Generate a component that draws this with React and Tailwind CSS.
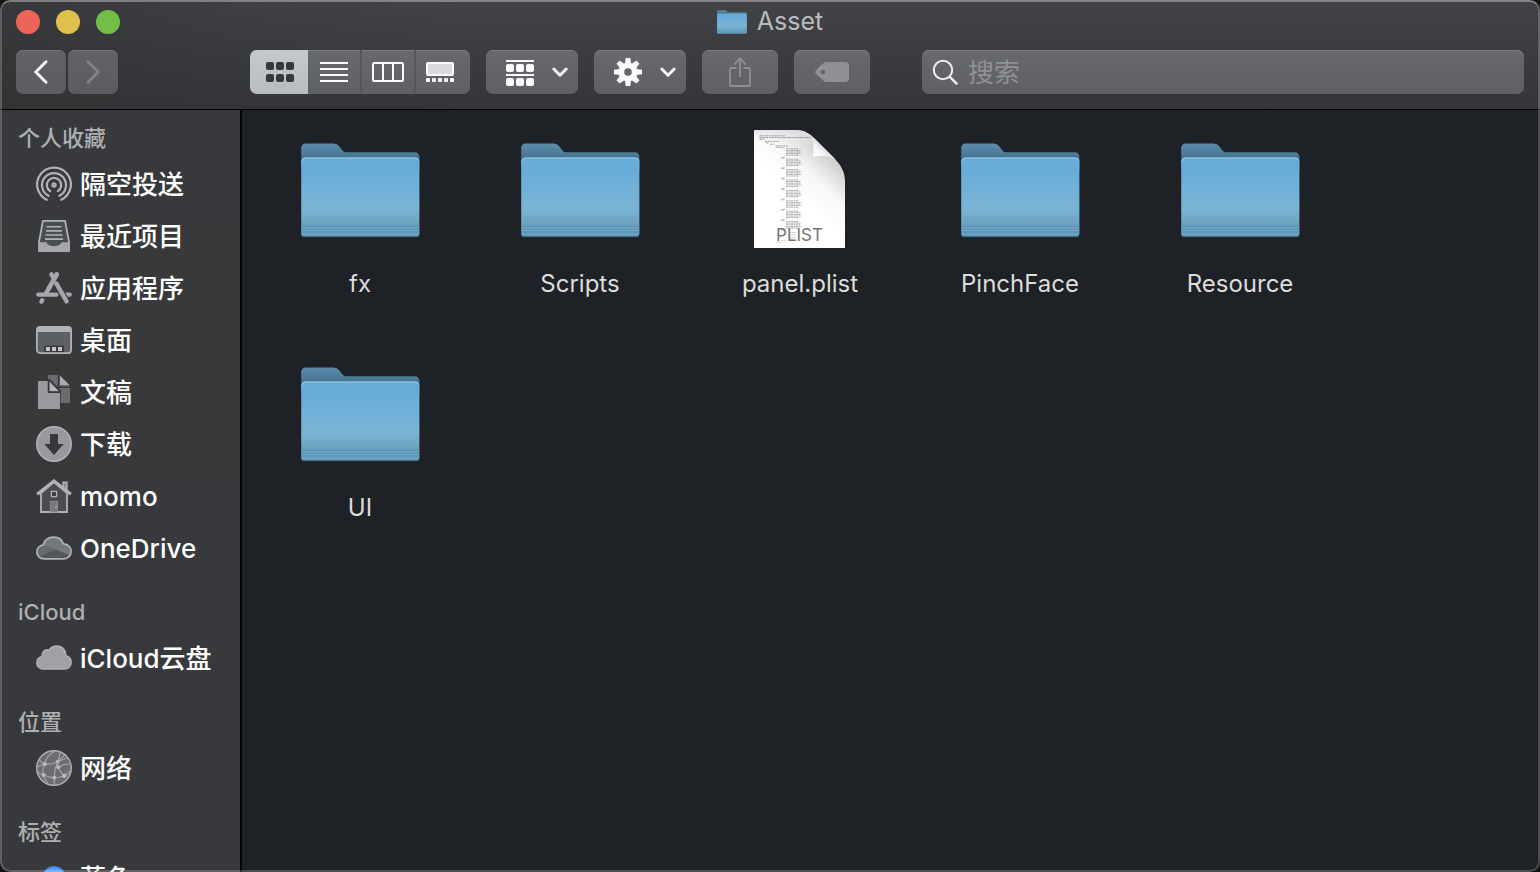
import React from "react";

const LIGHT = "#b0b2b5";

/* ---------- sidebar icons, 36 x 36 ---------- */

function SideIcon({ children }) {
  return (
    <svg viewBox="0 0 36 36" className="size-9 shrink-0" fill="none" aria-hidden="true">
      {children}
    </svg>
  );
}

const AirDropIcon = () => (
  <SideIcon>
    <g stroke={LIGHT} strokeWidth="2.2" strokeLinecap="round">
      <path d="M10.8 33.8A16.9 16.9 0 1 1 25.2 33.8" />
      <path d="M12.6 29.8A12 12 0 1 1 23.4 29.8" />
      <path d="M14.2 25.2A7.2 7.2 0 1 1 21.8 25.2" />
    </g>
    <circle cx="18" cy="19" r="2.7" fill={LIGHT} />
    <circle cx="18" cy="19" r="0.6" fill="#6d6f72" />
  </SideIcon>
);

const RecentsIcon = () => (
  <SideIcon>
    <path d="M6.9 2.9H29.1L33 24V33H3V24Z" fill="#4b4e51" stroke={LIGHT} strokeWidth="1.8" strokeLinejoin="round" />
    <g stroke={LIGHT} strokeWidth="1.6">
      <path d="M10.5 8.8H25.5M10 12.9H26M9.5 17H26.5M9 21.1H27" />
    </g>
    <path d="M2.2 24.2H10.5C11 26.6 14 28 18 28S25 26.6 25.5 24.2H33.8V31.5Q33.8 34 31.5 34H4.5Q2.2 34 2.2 31.5Z" fill="#a5a7aa" />
  </SideIcon>
);

const AppsIcon = () => (
  <SideIcon>
    <g stroke="#a5a7aa" strokeWidth="4.4" strokeLinecap="round">
      <path d="M15.4 4.4L17 7.2" />
      <path d="M20.8 4.4L9.6 24" />
      <path d="M6.2 30.3L5.4 31.6" />
      <path d="M2.3 24.6H20.4" />
      <path d="M29 24.6H33.7" />
      <path d="M19.6 12L30.6 31.4" stroke="#38393c" strokeWidth="6.4" strokeLinecap="butt" />
      <path d="M20.4 13.6L30.6 31.4" />
    </g>
    <path d="M20.8 4.4L12.6 18.8" stroke="#a5a7aa" strokeWidth="4.4" strokeLinecap="round" />
  </SideIcon>
);

const DesktopIcon = () => (
  <SideIcon>
    <rect x="0.9" y="4.9" width="34.2" height="26.2" rx="3" fill="#5d6063" stroke={LIGHT} strokeWidth="1.8" />
    <path d="M1 10V7.5Q1 5 3.5 5H32.5Q35 5 35 7.5V10Z" fill={LIGHT} />
    <rect x="8.2" y="23.6" width="19.8" height="6.4" fill="#38393c" />
    <path d="M10 25h4v4h-4zM16 25h4v4h-4zM22 25h4v4h-4z" fill="#c3c5c7" />
  </SideIcon>
);

const DocumentsIcon = () => (
  <SideIcon>
    <path d="M12 1H23.5L34 12V29H24.8V18L12 5Z" fill="#6a6c6f" />
    <path d="M22.6 0V13.2H36" stroke="#38393c" strokeWidth="1.6" />
    <path d="M24 1.8V11H33.4Z" fill="#a9abae" />
    <path d="M2 7H13L24 18.6V35H2Z" fill="#989a9d" />
    <path d="M12.9 5L25 17.8" stroke="#38393c" strokeWidth="1.6" />
    <path d="M12.6 6V18.2H24.6" stroke="#38393c" strokeWidth="1.7" />
    <path d="M14 8.4V16.7H22.4Z" fill="#b4b6b9" />
  </SideIcon>
);

const DownloadsIcon = () => (
  <SideIcon>
    <circle cx="18" cy="18" r="17.2" fill="#97999c" stroke={LIGHT} strokeWidth="1.6" />
    <path d="M14 8H22V18H27.6L18 29L8.4 18H14Z" fill="#36383b" />
  </SideIcon>
);

const HomeIcon = () => (
  <SideIcon>
    <path d="M27 12V4.2H31V15" fill="#8b8d90" stroke={LIGHT} strokeWidth="1.4" />
    <path d="M5 15L18 4L31 15V34H5Z" fill="#4a4c4f" stroke={LIGHT} strokeWidth="1.8" />
    <path d="M1.2 16.2L18 3.1L34.8 16.2" stroke={LIGHT} strokeWidth="3.2" />
    <rect x="15.4" y="13.4" width="5.2" height="5.2" fill="#38393c" stroke={LIGHT} strokeWidth="1.3" />
    <rect x="14.4" y="23.4" width="7.2" height="10.6" fill="#77797c" stroke="#8b8d90" strokeWidth="1" />
    <circle cx="20" cy="29" r=".8" fill="#c3c5c7" />
  </SideIcon>
);

const OneDriveIcon = () => (
  <SideIcon>
    <path d="M8 28.8C3.8 28.8 .9 25.8 .9 22C.9 18.5 3.5 15.6 7 15.2C8.5 9.8 13 7.2 18 7.2C22.4 7.2 26 9.4 27.4 13.8C32 14.2 35.1 17.2 35.1 21.3C35.1 25.6 32 28.8 27.8 28.8Z" fill="#76797c" />
    <path d="M1.2 22C1.2 18 4 15.4 8 15.4C11 15.4 12.6 16.4 20 20.2L4 27Z" fill="#686b6e" />
    <path d="M3 26.6L20 19.6L33.6 25.6C32 28 30 28.8 27.8 28.8H8C6 28.8 4.2 28 3 26.6Z" fill="#55585b" />
    <path d="M8 28.8C3.8 28.8 .9 25.8 .9 22C.9 18.5 3.5 15.6 7 15.2C8.5 9.8 13 7.2 18 7.2C22.4 7.2 26 9.4 27.4 13.8C32 14.2 35.1 17.2 35.1 21.3C35.1 25.6 32 28.8 27.8 28.8Z" stroke={LIGHT} strokeWidth="1.7" />
  </SideIcon>
);

const ICloudIcon = () => (
  <SideIcon>
    <path d="M7.4 29.1C3.5 29.1 .9 26.4 .9 23C.9 19.8 2.9 17.4 6 16.8C5.5 12 8.8 8.9 13 10.2C14.4 7.4 17.6 5.9 21 5.9C26.2 5.9 30 10 29.8 15.8C33 16.5 35.1 19.2 35.1 22.5C35.1 26.4 32.3 29.1 28.5 29.1Z" fill="#9fa1a4" stroke={LIGHT} strokeWidth="1.5" />
  </SideIcon>
);

const NetworkIcon = () => (
  <SideIcon>
    <circle cx="18" cy="18" r="17.3" fill="#6b6d70" stroke={LIGHT} strokeWidth="1.4" />
    <g stroke="#a4a6a9" strokeWidth="1.1">
      <path d="M3.4 9.6Q5 13 8.7 14Q16 14.8 21.7 11.7Q28 9 32 7.8" />
      <path d="M19 1Q9.5 6 8.7 14Q5.6 20 7.7 25Q9 30 12 34" />
      <path d="M24 2Q23.6 8 21.7 11.7Q18 20 18.3 27.7Q18 31.5 19 35" />
      <path d="M1 20.5Q3 24 7.7 25Q13 27.6 18.3 27.7Q24 27.6 28.3 25.7Q32.5 24 34.6 20" />
      <path d="M34.6 14Q28 13.6 22.3 17.3" />
      <path d="M8.7 14Q5 15 1 17" />
      <path d="M21.7 11.7L22.3 17.3Q24.4 23 28.3 25.7" />
      <path d="M21.7 11.7Q26 8 29 4.8" />
    </g>
    <g fill="#b8babc">
      <circle cx="8.7" cy="14" r="2.1" />
      <circle cx="21.7" cy="11.7" r="1.9" />
      <circle cx="22.3" cy="17.3" r="2" />
      <circle cx="7.7" cy="25" r="2" />
      <circle cx="18.3" cy="27.7" r="1.9" />
      <circle cx="28.3" cy="25.7" r="2.3" />
    </g>
  </SideIcon>
);

const BlueTagIcon = () => (
  <SideIcon>
    <circle cx="18" cy="18" r="11.3" fill="#5a9ff8" stroke="#3b82f6" strokeWidth="1.4" />
  </SideIcon>
);

/* ---------- file icons ---------- */

function FolderArt({ className, viewBox = "0 0 128 128" }) {
  return (
    <svg viewBox={viewBox} className={className} aria-hidden="true">
      <defs>
        <linearGradient id="folderBack" x1="0" y1="0" x2="0" y2="1">
          <stop offset="0" stopColor="#5a8dac" />
          <stop offset="0.5" stopColor="#4a7590" />
          <stop offset="1" stopColor="#4a7590" />
        </linearGradient>
        <linearGradient id="folderFront" x1="0" y1="0" x2="0" y2="1">
          <stop offset="0" stopColor="#66acda" />
          <stop offset="0.15" stopColor="#68add9" />
          <stop offset="0.65" stopColor="#7ab4d5" />
          <stop offset="0.86" stopColor="#6b9fbe" />
          <stop offset="1" stopColor="#6199bb" />
        </linearGradient>
      </defs>
      <path d="M5.2 40V22.4Q5.2 17.5 10 17.5H38Q41 17.5 43 20L46.5 24.4Q48 26.3 50.5 26.3H118.4Q123.4 26.3 123.4 31.3V44H5.2Z" fill="url(#folderBack)" />
      <path d="M5.2 36.5Q5.2 31.5 10 31.5H118.6Q123.4 31.5 123.4 36.5V107.5Q123.4 110.8 120.4 110.8H8.2Q5.2 110.8 5.2 107.5Z" fill="url(#folderFront)" />
      <path d="M5.8 36Q6.4 32.1 10 32.1H118.6Q122.2 32.1 122.8 36" fill="none" stroke="#8cc6e8" strokeWidth="1.1" />
      <path d="M5.4 100.5H123.2M5.4 103.2H123.2M5.4 105.9H123.2" stroke="#5b90b0" strokeWidth="0.9" />
      <path d="M5.4 101.8H123.2M5.4 104.5H123.2M5.6 108.2H123" stroke="#71adce" strokeWidth="0.9" />
      <path d="M5.6 109.4Q6.2 110.6 8.2 110.6H120.4Q122.4 110.6 123 109.4" fill="none" stroke="#3f7391" strokeWidth="1" />
    </svg>
  );
}

const CLUSTERS = [0, 1, 2, 3, 4, 5, 6, 7];

function PlistArt({ className }) {
  return (
    <svg viewBox="0 0 128 128" className={className} aria-hidden="true">
      <defs>
        <linearGradient id="sheet" x1="0.5" y1="0.56" x2="0.76" y2="0.2">
          <stop offset="0" stopColor="#ffffff" />
          <stop offset="0.5" stopColor="#f7f7f7" />
          <stop offset="1" stopColor="#d2d2d2" />
        </linearGradient>
        <linearGradient id="sheetTop" x1="0" y1="0" x2="0" y2="1">
          <stop offset="0" stopColor="#e2dde2" stopOpacity="0.8" />
          <stop offset="0.14" stopColor="#ffffff" stopOpacity="0" />
        </linearGradient>
        <linearGradient id="curl" x1="0.05" y1="0.95" x2="0.5" y2="0.5">
          <stop offset="0" stopColor="#ffffff" />
          <stop offset="0.6" stopColor="#fafafa" />
          <stop offset="1" stopColor="#dedede" />
        </linearGradient>
      </defs>
      <path d="M18 4H60C69 4 74 8 79 13L98 32C105 39 109 46 109 56V122H18Z" fill="url(#sheet)" />
      <path d="M18 4H60C69 4 74 8 79 13L98 32C105 39 109 46 109 56V122H18Z" fill="url(#sheetTop)" />
      <g stroke="#8c8c8c" strokeWidth="0.8">
        <path d="M23.5 9.8H49M23.5 11.6H75M23.5 13.2H29" strokeDasharray="3 0.6 1.6 0.5" />
        <path d="M29 15.4H43M30 16.8H33M34 18.2H38M39.5 19.9H53M40 21.2H45" strokeDasharray="2 0.6" />
      </g>
      {CLUSTERS.map((n) => {
        const y = 22.8 + n * 10.4;
        return (
          <g key={n} stroke="#969696" strokeWidth="0.8">
            <path d={`M50 ${y}h12.5M50 ${y + 1.6}h15M50 ${y + 3.2}h14.5M50 ${y + 4.8}h15.5M50 ${y + 6.4}h13`} strokeDasharray="2.6 0.5 1.4 0.4" />
            <path d={`M45 ${y - 1}h4M45 ${y + 8.6}h4`} stroke="#a8a8a8" strokeDasharray="1.5 0.4" />
          </g>
        );
      })}
      <g stroke="#b8b8b8" strokeWidth="0.8" strokeDasharray="1.5 0.5">
        <path d="M54 106.5h6M54 109h6M54 111.5h6M45 114.8h5M40 116.4h5" />
      </g>
      <path d="M76 11C78 18 77.5 25 77 31C85 28.5 93 29.5 99.5 33.5L79 13Z" fill="url(#curl)" />
      <text x="63.5" y="115" textAnchor="middle" fontSize="17" fill="#747474" className="font-['Inter','Liberation_Sans',sans-serif]">
        PLIST
      </text>
    </svg>
  );
}

/* ---------- toolbar icons ---------- */

const GridIcon = () => (
  <svg width="28" height="20" viewBox="0 0 28 20" fill="#363a3d" aria-hidden="true">
    {[0, 10, 20].map((x) => [0, 12].map((y) => <rect key={`${x}-${y}`} x={x} y={y} width="8" height="8" rx="2" />))}
  </svg>
);

const ListIcon = () => (
  <svg width="28" height="20" viewBox="0 0 28 20" fill="#fafbff" aria-hidden="true">
    <path d="M0 0h28v2H0zM0 6h28v2H0zM0 12h28v2H0zM0 18h28v2H0z" />
  </svg>
);

const ColumnsIcon = () => (
  <svg width="32" height="20" viewBox="0 0 32 20" fill="none" stroke="#fafbff" strokeWidth="2" aria-hidden="true">
    <rect x="1" y="1" width="30" height="18" rx="1.5" />
    <path d="M11 1v18M21 1v18" />
  </svg>
);

const GalleryIcon = () => (
  <svg width="28" height="20" viewBox="0 0 28 20" aria-hidden="true">
    <rect x="1" y="1" width="26" height="12" rx="1" fill="#d8dadd" stroke="#fafbff" strokeWidth="2" />
    {[0, 6, 12, 18, 24].map((x) => (
      <rect key={x} x={x} y="16" width="4" height="4" rx="1" fill="#fafbff" />
    ))}
  </svg>
);

const ArrangeIcon = () => (
  <svg width="28" height="26" viewBox="0 0 28 26" fill="#fafbff" className="mt-0.5" aria-hidden="true">
    <path d="M0 0h28v2H0zM0 14h28v2H0z" />
    {[0, 10, 20].map((x) => [4, 18].map((y) => <rect key={`${x}-${y}`} x={x} y={y} width="8" height="8" rx="2" />))}
  </svg>
);

const GearIcon = () => (
  <svg width="28" height="28" viewBox="-14 -14 28 28" fill="#fafbff" aria-hidden="true">
    <circle r="6.7" fill="none" stroke="#fafbff" strokeWidth="5.8" />
    {[0, 45, 90, 135, 180, 225, 270, 315].map((a) => (
      <path key={a} d="M-3 -8.5L-2.3 -14H2.3L3 -8.5Z" transform={`rotate(${a})`} />
    ))}
  </svg>
);

const DownChevron = () => (
  <svg width="16" height="10" viewBox="0 0 16 10" fill="none" stroke="#fafbff" strokeWidth="2.9" strokeLinecap="round" strokeLinejoin="round" aria-hidden="true">
    <path d="M1.8 2L8 8.2L14.2 2" />
  </svg>
);

const ShareIcon = () => (
  <svg width="22" height="30" viewBox="0 0 22 30" fill="none" stroke="#8e9093" strokeWidth="1.8" aria-hidden="true">
    <path d="M7.5 11H1.9Q1 11 1 12V28Q1 29 2 29H20Q21 29 21 28V12Q21 11 20 11H14.5" />
    <path d="M11 20V1.4M5.2 7.6L11 1.4L16.8 7.6" />
  </svg>
);

const TagIcon = () => (
  <svg width="34" height="20" viewBox="0 0 34 20" fill="#8e9093" aria-hidden="true">
    <path fillRule="evenodd" d="M9.5 0.6Q10.4 0 11.5 0H30Q34 0 34 4V16Q34 20 30 20H11.5Q10.4 20 9.5 19.4Q4.5 16 1 11.8Q-.6 10 1 8.2Q4.5 4 9.5 .6ZM8 7.8A2.2 2.2 0 1 0 8 12.2A2.2 2.2 0 1 0 8 7.8Z" />
  </svg>
);

const SearchIcon = () => (
  <svg width="26" height="26" viewBox="0 0 26 26" fill="none" stroke="#eceef0" strokeWidth="2" strokeLinecap="round" aria-hidden="true">
    <circle cx="11" cy="11" r="9.2" />
    <path d="M17.8 17.8L24.6 24.6" strokeWidth="2.4" />
  </svg>
);

const control =
  "flex h-11 items-center rounded-[7px] bg-linear-to-b from-[#67696d] to-[#5f6064] shadow-[inset_0_1px_0_#7a7c80]";

function NavButton({ label, path, color, disabled }) {
  return (
    <button type="button" aria-label={label} disabled={disabled} className="flex h-11 w-[50px] items-center justify-center rounded-[7px] bg-linear-to-b from-[#616265] to-[#5b5c5f] shadow-[inset_0_1px_0_#737477]">
      <svg width="16" height="24" viewBox="0 0 16 24" fill="none" stroke={color} strokeWidth="2.9" strokeLinecap="round" strokeLinejoin="round" aria-hidden="true">
        <path d={path} />
      </svg>
    </button>
  );
}

function Toolbar() {
  return (
    <header className="shrink-0 border-b border-black bg-linear-to-b from-[#414347] to-[#343538]">
      <div className="bg-linear-to-r from-[#303132]/60 via-[#303132]/20 via-15% to-transparent to-30% px-4 pt-[3px] pb-[15px]">
        <div className="grid h-[38px] grid-cols-[1fr_auto_1fr] items-center">
          <div className="flex gap-4">
            <button type="button" aria-label="关闭" className="size-6 rounded-full bg-[#ed6559]" />
            <button type="button" aria-label="最小化" className="size-6 rounded-full bg-[#e0c04c]" />
            <button type="button" aria-label="缩放" className="size-6 rounded-full bg-[#72be47]" />
          </div>
          <h1 className="flex items-center gap-2.5 text-[25px] text-[#b9bbbe]">
            <FolderArt className="h-6 w-[30px]" viewBox="5 17 119 95" />
            Asset
          </h1>
        </div>
        <div className="mt-[9px] flex gap-4">
          <div className="mr-[116px] flex gap-0.5">
            <NavButton label="后退" path="M13 1.8L2.8 12L13 22.2" color="#ffffff" />
            <NavButton label="前进" path="M3 1.8L13.2 12L3 22.2" color="#818285" disabled />
          </div>
          <div role="group" aria-label="显示" className={`${control} overflow-hidden`}>
            <button type="button" aria-label="图标" aria-pressed="true" className="flex h-11 w-[58px] items-center justify-center bg-linear-to-b from-[#c6cacd] to-[#b9bcbf] pl-0.5">
              <GridIcon />
            </button>
            <button type="button" aria-label="列表" className="flex h-11 w-[54px] items-center justify-center border-r-2 border-[#55575a]">
              <ListIcon />
            </button>
            <button type="button" aria-label="分栏" className="flex h-11 w-[54px] items-center justify-center border-r-2 border-[#55575a]">
              <ColumnsIcon />
            </button>
            <button type="button" aria-label="画廊" className="flex h-11 w-[54px] items-center justify-center pr-1.5">
              <GalleryIcon />
            </button>
          </div>
          <button type="button" aria-label="排列" className={`${control} w-[92px] justify-between pr-2.5 pl-5`}>
            <ArrangeIcon />
            <DownChevron />
          </button>
          <button type="button" aria-label="操作" className={`${control} w-[92px] justify-between pr-2.5 pl-5`}>
            <GearIcon />
            <DownChevron />
          </button>
          <button type="button" aria-label="共享" disabled className={`${control} w-[76px] justify-center`}>
            <ShareIcon />
          </button>
          <button type="button" aria-label="编辑标签" disabled className={`${control} w-[76px] justify-center`}>
            <TagIcon />
          </button>
          <label className={`${control} ml-9 min-w-0 flex-1 gap-2.5 pl-2.5`}>
            <SearchIcon />
            <input type="search" aria-label="搜索" placeholder="搜索" className="h-11 min-w-0 flex-1 bg-transparent text-[26px] text-white outline-none placeholder:text-[#8f9194]" />
          </label>
        </div>
      </div>
    </header>
  );
}

const SECTIONS = [
  {
    title: "个人收藏",
    items: [
      ["隔空投送", AirDropIcon],
      ["最近项目", RecentsIcon],
      ["应用程序", AppsIcon],
      ["桌面", DesktopIcon],
      ["文稿", DocumentsIcon],
      ["下载", DownloadsIcon],
      ["momo", HomeIcon],
      ["OneDrive", OneDriveIcon],
    ],
  },
  { title: "iCloud", items: [["iCloud云盘", ICloudIcon]] },
  { title: "位置", items: [["网络", NetworkIcon]] },
  { title: "标签", items: [["蓝色", BlueTagIcon]] },
];

function Sidebar() {
  return (
    <nav aria-label="边栏" className="flex w-[242px] shrink-0 flex-col gap-[18px] overflow-y-auto border-r-2 border-black bg-linear-to-b from-[#37393c] via-[#39393a] via-35% to-[#38393d] to-60% pt-2 [scrollbar-width:none]">
      {SECTIONS.map((section) => (
        <section key={section.title}>
          <h2 className="flex h-10 items-center pl-[18px] text-[22px] font-medium text-[#adafb2]">{section.title}</h2>
          <ul>
            {section.items.map(([name, Icon]) => (
              <li key={name}>
                <a href="#" className="flex h-[52px] items-center gap-2 pl-9 text-[26px] font-medium whitespace-nowrap text-white">
                  <Icon />
                  {name}
                </a>
              </li>
            ))}
          </ul>
        </section>
      ))}
    </nav>
  );
}

const FILES = [
  ["fx", FolderArt],
  ["Scripts", FolderArt],
  ["panel.plist", PlistArt],
  ["PinchFace", FolderArt],
  ["Resource", FolderArt],
  ["UI", FolderArt],
];

function FileGrid() {
  return (
    <main className="min-w-0 flex-1 overflow-y-auto bg-[#1e2125] pt-4 pl-2">
      <ul className="grid auto-rows-[224px] grid-cols-[repeat(auto-fill,220px)]">
        {FILES.map(([name, Art]) => (
          <li key={name} className="flex justify-center">
            <button type="button" className="flex flex-col items-center gap-3.5 self-start text-2xl text-[#dcdddd]">
              <Art className="size-32" />
              {name}
            </button>
          </li>
        ))}
      </ul>
    </main>
  );
}

export default function App() {
  return (
    <div lang="zh-CN" className="h-screen bg-[#151515] font-['Inter','Noto_Sans_CJK_SC',sans-serif]">
      <div className="relative flex h-full flex-col overflow-hidden rounded-[10px]">
        <Toolbar />
        <div className="flex min-h-0 flex-1">
          <Sidebar />
          <FileGrid />
        </div>
        <div className="pointer-events-none absolute inset-0 rounded-[10px] border-2 border-white/20 border-t-white/35" />
      </div>
    </div>
  );
}
